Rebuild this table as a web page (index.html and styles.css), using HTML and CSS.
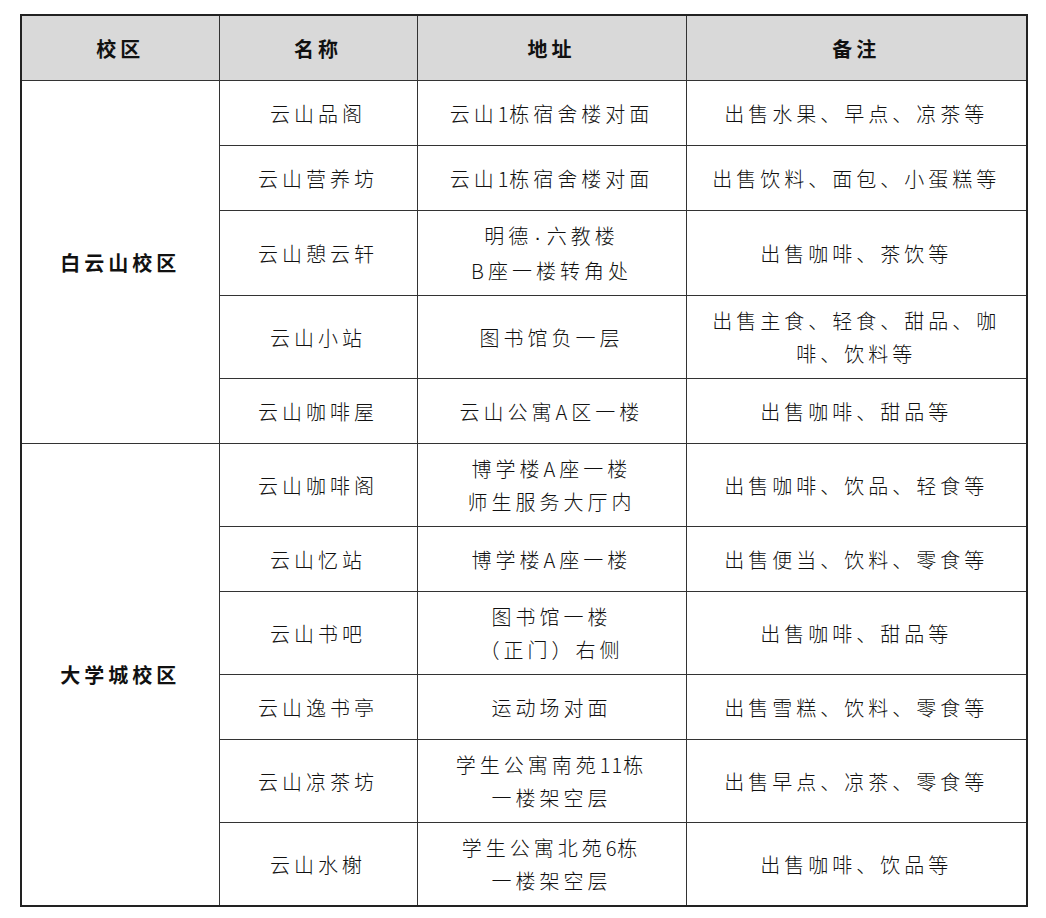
FILE: index.html
```html
<!DOCTYPE html>
<html lang="zh-CN">
<head>
<meta charset="utf-8">
<title>校区商店</title>
<link rel="stylesheet" href="styles.css">
</head>
<body>
<table class="shops">
  <colgroup>
    <col class="c1"><col class="c2"><col class="c3"><col class="c4">
  </colgroup>
  <thead>
    <tr class="head"><th>校区</th><th>名称</th><th>地址</th><th>备注</th></tr>
  </thead>
  <tbody>
    <tr class="r1"><td rowspan="5" class="campus">白云山校区</td><td>云山品阁</td><td>云山<span class="num">1</span>栋宿舍楼对面</td><td>出售水果、早点、凉茶等</td></tr>
    <tr class="r1"><td>云山营养坊</td><td>云山<span class="num">1</span>栋宿舍楼对面</td><td>出售饮料、面包、小蛋糕等</td></tr>
    <tr class="r2"><td>云山憩云轩</td><td>明德<span class="dot">·</span>六教楼<br>B座一楼转角处</td><td>出售咖啡、茶饮等</td></tr>
    <tr class="r2"><td>云山小站</td><td>图书馆负一层</td><td>出售主食、轻食、甜品、咖<br>啡、饮料等</td></tr>
    <tr class="r1"><td>云山咖啡屋</td><td>云山公寓A区一楼</td><td>出售咖啡、甜品等</td></tr>
    <tr class="r2"><td rowspan="7" class="campus">大学城校区</td><td>云山咖啡阁</td><td>博学楼A座一楼<br>师生服务大厅内</td><td>出售咖啡、饮品、轻食等</td></tr>
    <tr class="r1"><td>云山忆站</td><td>博学楼A座一楼</td><td>出售便当、饮料、零食等</td></tr>
    <tr class="r2"><td>云山书吧</td><td>图书馆一楼<br>（正门）右侧</td><td>出售咖啡、甜品等</td></tr>
    <tr class="r1"><td>云山逸书亭</td><td>运动场对面</td><td>出售雪糕、饮料、零食等</td></tr>
    <tr class="r2"><td>云山凉茶坊</td><td>学生公寓南苑<span class="num">11</span>栋<br>一楼架空层</td><td>出售早点、凉茶、零食等</td></tr>
    <tr class="r2"><td>云山水榭</td><td>学生公寓北苑<span class="num">6</span>栋<br>一楼架空层</td><td>出售咖啡、饮品等</td></tr>
  </tbody>
</table>
</body>
</html>
```
FILE: styles.css
```css
html, body {
  margin: 0;
  padding: 0;
  background: #ffffff;
}
body {
  padding: 14px 0 0 20px;
  font-family: "Noto Sans CJK SC", "Noto Sans", sans-serif;
  color: #111;
}
.shops {
  border-collapse: collapse;
  table-layout: fixed;
  width: 1006px;
  border: 2px solid #222;
}
.c1 { width: 198px; }
.c2 { width: 198px; }
.c3 { width: 269px; }
.c4 { width: 341px; }
.shops th, .shops td {
  border: 1.5px solid #333;
  text-align: center;
  vertical-align: middle;
  padding: 8px 4px;
  font-size: 20px;
  line-height: 33px;
  letter-spacing: 4px;
  font-weight: 300;
  white-space: nowrap;
}
.shops th {
  background: #d9d9d9;
  font-weight: 700;
  height: 48px;
}
.shops .campus {
  font-weight: 700;
  font-size: 20px;
}
.num {
  letter-spacing: 1px;
}
.dot {
  font-family: "Liberation Sans", sans-serif;
  letter-spacing: 0;
  margin: 0 6px 0 2px;
}
.r1 td { height: 48px; }
.r2 td { height: 65px; }
```
